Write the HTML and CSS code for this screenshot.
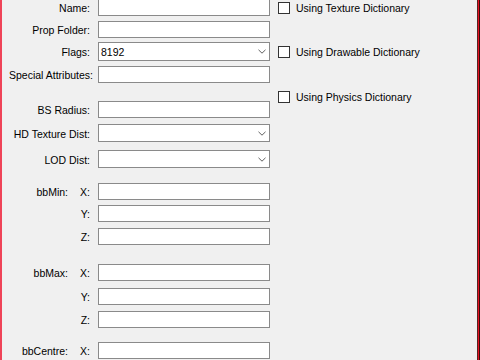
FILE: index.html
```html
<!DOCTYPE html>
<html>
<head>
<meta charset="utf-8">
<link rel="stylesheet" href="styles.css">
</head>
<body>
<div class="window"><div class="frame"><div class="content">
  <div class="form">
    <div class="row r-name"><span class="label">Name:</span><div class="box"></div></div>
    <div class="row r-prop"><span class="label">Prop Folder:</span><div class="box"></div></div>
    <div class="row r-flags combo-row"><span class="label">Flags:</span><div class="box combo"><span class="val">8192</span><svg class="chev" width="8" height="5" viewBox="0 0 8 5"><path d="M0.5 0.8 L4 4.2 L7.5 0.8" fill="none" stroke="#606060" stroke-width="1"/></svg></div></div>
    <div class="row r-special"><span class="label wide">Special Attributes:</span><div class="box"></div></div>
    <div class="row r-bs"><span class="label">BS Radius:</span><div class="box"></div></div>
    <div class="row r-hd combo-row"><span class="label">HD Texture Dist:</span><div class="box combo"><span class="val"></span><svg class="chev" width="8" height="5" viewBox="0 0 8 5"><path d="M0.5 0.8 L4 4.2 L7.5 0.8" fill="none" stroke="#606060" stroke-width="1"/></svg></div></div>
    <div class="row r-lod combo-row"><span class="label">LOD Dist:</span><div class="box combo"><span class="val"></span><svg class="chev" width="8" height="5" viewBox="0 0 8 5"><path d="M0.5 0.8 L4 4.2 L7.5 0.8" fill="none" stroke="#606060" stroke-width="1"/></svg></div></div>

    <div class="row r-g1"><span class="group">bbMin:</span><span class="axis">X:</span><div class="box"></div></div>
    <div class="row r-y"><span class="group"></span><span class="axis">Y:</span><div class="box"></div></div>
    <div class="row r-z"><span class="group"></span><span class="axis">Z:</span><div class="box"></div></div>

    <div class="row r-g2"><span class="group">bbMax:</span><span class="axis">X:</span><div class="box"></div></div>
    <div class="row r-y2"><span class="group"></span><span class="axis">Y:</span><div class="box"></div></div>
    <div class="row r-z"><span class="group"></span><span class="axis">Z:</span><div class="box"></div></div>

    <div class="row r-g3"><span class="group">bbCentre:</span><span class="axis">X:</span><div class="box"></div></div>
  </div>
  <div class="checks">
    <div class="check c1"><span class="cb"></span><span class="ctext">Using Texture Dictionary</span></div>
    <div class="check c2"><span class="cb"></span><span class="ctext">Using Drawable Dictionary</span></div>
    <div class="check c3"><span class="cb"></span><span class="ctext">Using Physics Dictionary</span></div>
  </div>
</div></div></div>
</body>
</html>
```
FILE: styles.css
```css
html, body {
  margin: 0;
  padding: 0;
  background: #f0f0f0;
  width: 480px;
  height: 360px;
  overflow: hidden;
}
.window {
  box-sizing: border-box;
  width: 480px;
  height: 360px;
  border-left: 2px solid #ef4358;
  border-right: 1px solid #3c0a0a;
  background: #f0f0f0;
}
.frame {
  height: 100%;
  border-right: 1px solid #e81123;
}
.content {
  height: 100%;
  border-right: 1px solid #5a2020;
  display: flex;
  align-items: flex-start;
  font-family: "Liberation Sans", Arial, sans-serif;
  font-size: 10.5px;
  color: #000;
}
.form {
  width: 268px;
  display: flex;
  flex-direction: column;
}
.row {
  display: flex;
  align-items: center;
  height: 17px;
  flex: none;
}
.combo-row { height: 18px; }
.r-flags { height: 19px; }
.label {
  width: 88px;
  text-align: right;
  white-space: nowrap;
  margin-right: 8px;
  padding-top: 1px;
}
.label.wide {
  width: 91px;
  margin-right: 5px;
}
.group {
  width: 66px;
  text-align: right;
  white-space: nowrap;
  padding-top: 1px;
}
.axis {
  width: 22px;
  margin-right: 8px;
  text-align: right;
  padding-top: 1px;
}
.box {
  box-sizing: border-box;
  width: 172px;
  height: 100%;
  border: 1px solid #8a8a8a;
  background: #fff;
}
.combo {
  display: flex;
  align-items: center;
  justify-content: space-between;
  padding: 0 3px 0 2px;
}
.val { padding-top: 1px; }
.chev { display: block; }

.r-name { margin-top: -1px; }
.r-prop { margin-top: 5px; }
.r-flags { margin-top: 4px; }
.r-special { margin-top: 5px; }
.r-bs { margin-top: 18px; }
.r-hd { margin-top: 6px; }
.r-lod { margin-top: 8px; }
.r-g1 { margin-top: 15px; }
.r-y { margin-top: 5px; }
.r-z { margin-top: 6px; }
.r-g2 { margin-top: 19px; }
.r-y2 { margin-top: 7px; }
.r-g3 { margin-top: 14px; }

.checks {
  display: flex;
  flex-direction: column;
  padding-left: 8px;
}
.check {
  display: flex;
  align-items: center;
  height: 13px;
  white-space: nowrap;
}
.cb {
  box-sizing: border-box;
  width: 12px;
  height: 12px;
  border: 1px solid #333;
  background: #fff;
  margin-right: 6px;
  flex: none;
}
.ctext { padding-top: 1px; }
.c1 { margin-top: 1px; }
.c2 { margin-top: 31px; }
.c3 { margin-top: 32px; }
```
